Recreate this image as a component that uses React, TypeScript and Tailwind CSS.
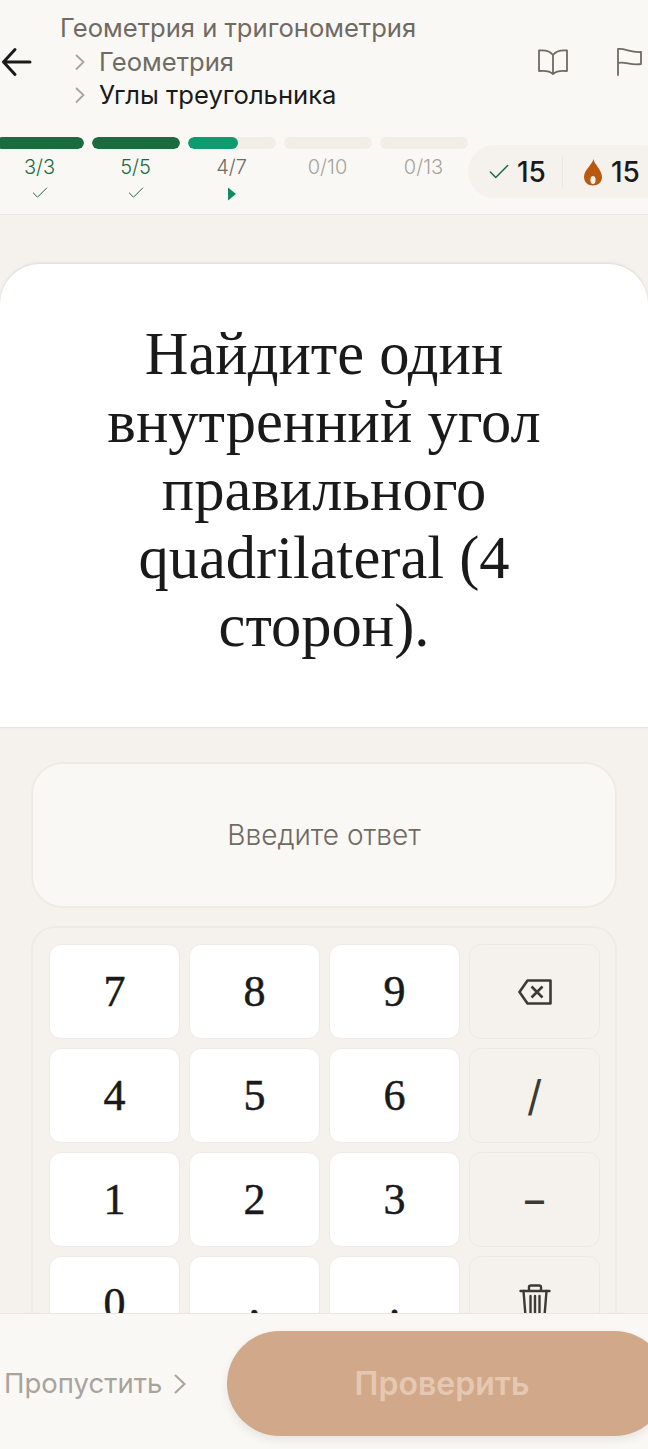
import { Check } from "lucide-react"

const segments = [
  { label: "3/3", fill: "w-full", bar: "bg-[#1B6B3F]", text: "text-[#1B6B3F]", mark: "check" },
  { label: "5/5", fill: "w-full", bar: "bg-[#1B6B3F]", text: "text-[#1B6B3F]", mark: "check" },
  { label: "4/7", fill: "w-[57%]", bar: "bg-[#0F9B6E]", text: "text-[#6F6A62]", mark: "play" },
  { label: "0/10", fill: "w-0", bar: "", text: "text-[#A8A39B]", mark: "" },
  { label: "0/13", fill: "w-0", bar: "", text: "text-[#A8A39B]", mark: "" },
]

const digits = ["7", "8", "9", "4", "5", "6", "1", "2", "3", "0"]

function Crumb() {
  return (
    <svg width="12" height="18" viewBox="0 0 12 18" fill="none" className="ml-[14px] mr-[13px] shrink-0">
      <path d="M2 2 L9.5 9 L2 16.5" stroke="#A8A39B" strokeWidth="1.8" />
    </svg>
  )
}

function DigitKey({ value, raised }: { value: string; raised?: boolean }) {
  return (
    <div className={`h-[95px] rounded-xl bg-white border border-[#EFEBE4] flex items-center justify-center text-[44px] leading-none text-[#1A1A1A] [-webkit-text-stroke:0.5px_#1A1A1A] font-['Liberation_Serif',serif] ${raised ? "pb-[5px]" : ""}`}>
      {value}
    </div>
  )
}

function SideKey({ children }: { children: React.ReactNode }) {
  return (
    <div className="h-[95px] rounded-xl bg-[#F5F2ED] border border-[#EDE9E2] flex items-center justify-center text-[#3D3A36]">
      {children}
    </div>
  )
}

export default function App() {
  return (
    <div className="h-[1449px] w-[648px] overflow-hidden flex flex-col bg-[#F5F2ED] font-['Inter',sans-serif]">
      <header className="h-[215px] shrink-0 bg-[#FAF8F5] border-b border-[#E9E6E0] overflow-hidden">
        <div className="h-[122px] flex items-start">
          <svg width="32" height="30" viewBox="0 0 32 30" fill="none" className="mt-[47px] shrink-0">
            <path d="M30 15 H4 M15 2.5 L3.5 15 L15 27.5" stroke="#1A1A1A" strokeWidth="3" strokeLinejoin="round" strokeLinecap="round" />
          </svg>
          <div className="ml-[28px] pt-[11px] flex-1 text-[25.6px] leading-[34px]">
            <div className="text-[#6F6A62]">Геометрия и тригонометрия</div>
            <div className="flex items-center text-[#6F6A62]">
              <Crumb />
              Геометрия
            </div>
            <div className="flex items-center text-[#1A1A1A] -mt-[1px]">
              <Crumb />
              Углы треугольника
            </div>
          </div>
          <svg width="32" height="28" viewBox="0 0 32 28" fill="none" className="mt-[48px] shrink-0" stroke="#6F6A62" strokeWidth="1.8" strokeLinejoin="round">
            <path d="M16 7 C13 3 7 2 2 2.5 V23 C7 22.5 13 23 16 26 C19 23 25 22.5 30 23 V2.5 C25 2 19 3 16 7 V26" />
          </svg>
          <svg width="28" height="30" viewBox="0 0 28 30" fill="none" className="mt-[47px] ml-[47px] mr-[4px] shrink-0" stroke="#6F6A62" strokeWidth="1.8" strokeLinejoin="round" strokeLinecap="round">
            <path d="M2 28 V2 C9 1 15 6 25 5 V17 C15 19 9 14 2 16" />
          </svg>
        </div>
        <div className="mt-[15px] flex -ml-[4px]">
          <div className="flex gap-[8px]">
            {segments.map((s) => (
              <div key={s.label} className="w-[88px] flex flex-col items-center">
                <div className="w-full h-[12px] rounded-full bg-[#F1EEE8] overflow-hidden">
                  <div className={`h-full rounded-full ${s.fill} ${s.bar}`} />
                </div>
                <div className={`mt-[5px] -ml-[1px] text-[20px] leading-[26px] font-light ${s.text}`}>{s.label}</div>
                <div className="h-[26px] flex items-center justify-center">
                  {s.mark === "check" && <Check className="w-[20px] h-[20px] text-[#1B6B3F]" strokeWidth={1.2} />}
                  {s.mark === "play" && (
                    <svg width="10" height="16" viewBox="0 0 10 16" className="mt-[2px]">
                      <path d="M1 1.5 L9 8 L1 14.5 Z" fill="#0F8A63" />
                    </svg>
                  )}
                </div>
              </div>
            ))}
          </div>
          <div className="mt-[8px] h-[53px] w-[200px] shrink-0 rounded-full bg-[#F5F2ED] flex items-center pl-[18px] text-[28px] font-medium text-[#1A1A1A]">
            <Check className="w-[26px] h-[26px] text-[#1B6B3F]" strokeWidth={1.4} />
            <span className="ml-[5px]">15</span>
            <div className="ml-[16px] w-px h-[30px] bg-[#E9E6E0]" />
            <svg width="20" height="28" viewBox="0 0 20 28" className="ml-[20px]">
              <path d="M10.5 1 C11 6 19 12 19 19 C19 24 15 27.5 10 27.5 C5 27.5 1 24 1 19 C1 12 9 7 10.5 1 Z" fill="#B9590F" />
              <ellipse cx="10" cy="22" rx="2.6" ry="4" fill="#F5F2ED" />
            </svg>
            <span className="ml-[8px]">15</span>
          </div>
        </div>
      </header>

      <main className="flex-1 min-h-0 overflow-hidden pt-[49px]">
        <section className="h-[464px] rounded-t-[40px] bg-white border-b border-[#E9E6E0] shadow-[0_-1px_3px_rgba(0,0,0,0.1)] px-[30px] pt-[56px] text-center text-[60.5px] leading-[68px] text-[#1A1A1A] font-['Liberation_Serif',serif]">
          Найдите один внутренний угол правильного quadrilateral (4 сторон).
        </section>
        <div className="px-[31px] pt-[34px]">
          <div className="h-[146px] rounded-[32px] bg-[#FAF8F5] border-2 border-[#EFEBE4] flex items-center justify-center text-[28px] font-light text-[#6F6A62]">
            Введите ответ
          </div>
          <div className="mt-[18px] rounded-[24px] border-2 border-[#EFEBE4] px-[16px] pt-[16px] pb-[16px]">
            <div className="grid grid-cols-[131px_131px_131px_131px] gap-x-[9px] gap-y-[9px]">
              {digits.slice(0, 3).map((d) => <DigitKey key={d} value={d} />)}
              <SideKey>
                <svg width="34" height="26" viewBox="0 0 34 26" fill="none" stroke="#3D3A36" strokeWidth="2.6" strokeLinejoin="round">
                  <path d="M9.5 1.5 H32.5 V24.5 H9.5 L1.5 13 Z" />
                  <path d="M13.5 7.5 L24.5 18.5 M24.5 7.5 L13.5 18.5" />
                </svg>
              </SideKey>
              {digits.slice(3, 6).map((d) => <DigitKey key={d} value={d} />)}
              <SideKey><span className="text-[42px] leading-none font-normal">/</span></SideKey>
              {digits.slice(6, 9).map((d) => <DigitKey key={d} value={d} />)}
              <SideKey><span className="text-[38px] leading-none font-medium">–</span></SideKey>
              <DigitKey value={digits[9]} />
              <DigitKey value="," raised />
              <DigitKey value="." raised />
              <SideKey>
                <svg width="32" height="40" viewBox="0 0 32 40" fill="none" stroke="#3D3A36" strokeWidth="2.4" strokeLinejoin="round" strokeLinecap="round">
                  <path d="M1.5 7 H30.5 M10 7 V3 C10 2 11 1.5 12 1.5 H20 C21 1.5 22 2 22 3 V7" />
                  <path d="M4.5 7 L7 38 H25 L27.5 7 M11.5 12 V33 M16 12 V33 M20.5 12 V33" />
                </svg>
              </SideKey>
            </div>
          </div>
        </div>
      </main>

      <footer className="h-[136px] shrink-0 bg-[#FAF8F5] border-t border-[#E9E6E0] flex items-center overflow-hidden">
        <div className="ml-[4px] mt-[4px] w-[223px] shrink-0 flex items-center text-[27.5px] text-[#A8A39B]">
          Пропустить
          <svg width="14" height="22" viewBox="0 0 14 22" fill="none" className="ml-[11px]">
            <path d="M2 2 L11.5 11 L2 20" stroke="#A8A39B" strokeWidth="2" />
          </svg>
        </div>
        <div className="mt-[4px] h-[105px] w-[440px] shrink-0 rounded-full bg-[#D1A88A] shadow-[0_4px_10px_rgba(0,0,0,0.08)] flex items-center justify-center pr-[10px] text-[32px] font-semibold text-[#E6C8B2]">
          Проверить
        </div>
      </footer>
    </div>
  )
}
